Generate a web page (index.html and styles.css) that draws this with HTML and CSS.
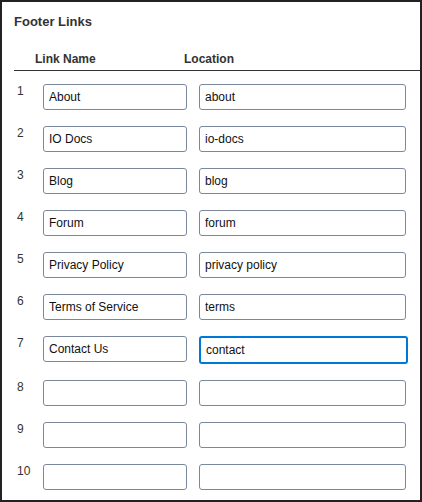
FILE: index.html
```html
<!DOCTYPE html>
<html>
<head>
<meta charset="utf-8">
<title>Footer Links</title>
<link rel="stylesheet" href="styles.css">
</head>
<body>
<div class="panel">
  <h2 class="title">Footer Links</h2>
  <div class="head">
    <span class="head-name">Link Name</span>
    <span class="head-loc">Location</span>
  </div>
  <div class="rows">
    <div class="row"><span class="num">1</span><input class="field name" type="text" value="About"><input class="field loc" type="text" value="about"></div>
    <div class="row"><span class="num">2</span><input class="field name" type="text" value="IO Docs"><input class="field loc" type="text" value="io-docs"></div>
    <div class="row"><span class="num">3</span><input class="field name" type="text" value="Blog"><input class="field loc" type="text" value="blog"></div>
    <div class="row"><span class="num">4</span><input class="field name" type="text" value="Forum"><input class="field loc" type="text" value="forum"></div>
    <div class="row"><span class="num">5</span><input class="field name" type="text" value="Privacy Policy"><input class="field loc" type="text" value="privacy policy"></div>
    <div class="row"><span class="num">6</span><input class="field name" type="text" value="Terms of Service"><input class="field loc" type="text" value="terms"></div>
    <div class="row"><span class="num">7</span><input class="field name" type="text" value="Contact Us"><input class="field loc focused" type="text" value="contact"></div>
    <div class="row"><span class="num">8</span><input class="field name" type="text" value=""><input class="field loc" type="text" value=""></div>
    <div class="row"><span class="num">9</span><input class="field name" type="text" value=""><input class="field loc" type="text" value=""></div>
    <div class="row"><span class="num">10</span><input class="field name" type="text" value=""><input class="field loc" type="text" value=""></div>
  </div>
</div>
</body>
</html>
```
FILE: styles.css
```css
html, body {
  margin: 0;
  padding: 0;
  background: #fff;
}
.panel {
  box-sizing: border-box;
  width: 422px;
  height: 502px;
  border: 2px solid #222;
  background: #fff;
  font-family: "Liberation Sans", Arial, sans-serif;
  color: #333;
  overflow: hidden;
}
.title {
  margin: 0;
  padding: 12px 0 0 12px;
  font-size: 13px;
  line-height: 16px;
  font-weight: bold;
  color: #333;
}
.head {
  display: flex;
  margin: 22px 0 0 12px;
  padding: 0 0 4px 21px;
  border-bottom: 1px solid #333;
  font-size: 12px;
  line-height: 14px;
  font-weight: bold;
  color: #333;
}
.head-name {
  width: 149px;
}
.rows {
  display: flex;
  flex-direction: column;
  gap: 16px;
  padding: 13px 0 0 15px;
}
.row {
  display: flex;
  align-items: flex-start;
}
.num {
  width: 26px;
  font-size: 12px;
  line-height: 14px;
  color: #333;
}
.field {
  box-sizing: content-box;
  height: 24px;
  margin: 0;
  padding: 0 5px;
  border: 1px solid #7b889b;
  border-radius: 3px;
  background: #fff;
  font-family: "Liberation Sans", Arial, sans-serif;
  font-size: 12px;
  line-height: 24px;
  color: #111;
  outline: none;
}
.name {
  width: 132px;
}
.loc {
  width: 195px;
  margin-left: 12px;
}
.focused {
  border: 2px solid #0078d7;
}
```
